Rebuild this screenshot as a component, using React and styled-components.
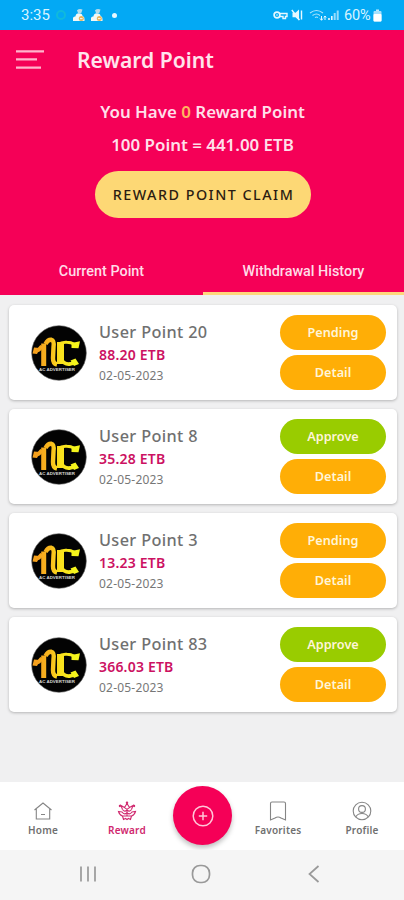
import React from "react";
import styled, { createGlobalStyle } from "styled-components";

const items = [
  { id: 1, name: "User Point 20", amount: "88.20 ETB", date: "02-05-2023", status: "Pending" },
  { id: 2, name: "User Point 8", amount: "35.28 ETB", date: "02-05-2023", status: "Approve" },
  { id: 3, name: "User Point 3", amount: "13.23 ETB", date: "02-05-2023", status: "Pending" },
  { id: 4, name: "User Point 83", amount: "366.03 ETB", date: "02-05-2023", status: "Approve" },
];

const CloudIcon = () => (
  <svg width="13" height="14" viewBox="0 0 13 14">
    <path d="M5 2.2Q7.5 0.2 10.5 1.6L9.3 5H6Z" fill="#b5dcec" />
    <path d="M1 13V10Q1.2 8.3 3.4 8.5Q4 5.2 7 5.3Q10.4 5.4 10.6 8.3Q12.6 8.6 12.5 11V13Z" fill="#f4f8f5" />
    <circle cx="9.3" cy="10.6" r="2.5" fill="#e8b45c" />
    <path d="M8 10.6h2.6" stroke="#fff" strokeWidth="0.9" />
  </svg>
);

const StatusIcons = () => (
  <svg width="68" height="14" viewBox="0 0 68 14" fill="none" stroke="#e6f8ff">
    <circle cx="4" cy="7" r="2.9" strokeWidth="1.7" />
    <path d="M6.5 5.5H14V8.5H12.5V10.5H10V8.5H6.5" strokeWidth="1.4" />
    <circle cx="4" cy="7" r="0.8" fill="#e6f8ff" stroke="none" />
    <path d="M19.5 4.7h3L26 1.5v11l-3.5-3.200H19.5Z" fill="#e6f8ff" stroke="none" />
    <path d="M18.8 2l7.700 10M28.5 2.5v9" strokeWidth="1.4" />
    <path d="M37 5Q43.5 0 50 5M39.5 7.5Q43.5 4.5 47 7.5M42 9.5Q43.5 8.5 45 9.5" strokeWidth="1.1" opacity="0.75" />
    <path d="M48.5 8v4M47 10.5l1.5 1.8 1.5-1.8M52 12V8M50.8 9.5L52 8l1.2 1.5" strokeWidth="1" />
    <path d="M56 12v-2M58.8 12V8" strokeWidth="1.6" />
    <path d="M61.7 12V5M64.7 12V2.5" strokeWidth="2" opacity="0.65" />
  </svg>
);

const BatteryIcon = () => (
  <svg width="9" height="13" viewBox="0 0 9 13">
    <path d="M3 0.5h3v1.5h-3Z" fill="#bfeaff" />
    <rect x="0.5" y="2" width="8" height="10.5" rx="1" fill="#a5e0fd" />
    <rect x="0.5" y="5" width="8" height="7.5" rx="1" fill="#fff" />
  </svg>
);

const MenuIcon = () => (
  <svg width="30" height="22" viewBox="0 0 30 22" stroke="#ffb3cc" strokeWidth="2.2">
    <path d="M1 2.3h28M1 10.3h21M1 18.7h25" />
  </svg>
);

const Logo = () => (
  <svg width="56" height="56" viewBox="0 0 56 56">
    <defs>
      <linearGradient id="gold" gradientUnits="userSpaceOnUse" x1="2" y1="0" x2="50" y2="0">
        <stop offset="0" stopColor="#f39a20" />
        <stop offset="0.35" stopColor="#f9b81d" />
        <stop offset="0.55" stopColor="#fbe01d" />
        <stop offset="1" stopColor="#f3f51c" />
      </linearGradient>
    </defs>
    <circle cx="28" cy="28" r="27.3" fill="#030303" stroke="#555" strokeWidth="0.6" />
    <g fill="none" stroke="url(#gold)">
      <path d="M4 25.500Q8 26 11 21" strokeWidth="4" />
      <path d="M12.700 18.500V41" strokeWidth="5" />
      <path d="M14.500 19Q17 14.300 20.500 14.800Q23.300 15.500 22.500 22L22 33Q21.800 38.500 26 39.500" strokeWidth="4.400" />
      <path d="M29.500 17V39" strokeWidth="7" />
      <path d="M27 19.500Q31 16.800 36 17.300Q40 17.600 43 19" strokeWidth="3" />
      <path d="M30 34Q33 39.800 39 39Q42 38.500 45 37" strokeWidth="3.800" />
    </g>
    <path d="M3 22.500l-1.500 6 4.500.5 3-6Z" fill="#f5a01c" />
    <path d="M40.500 18l8.500-1.700-1.500 7-7-.300Z" fill="#f5f51c" />
    <path d="M39.500 35.500l5-2 3.500 5.500-5 2Z" fill="#f5f51c" />
    <text x="8" y="46.200" fontSize="4.200" fill="#d4d4d4" fontWeight="700" fontFamily="Liberation Sans, sans-serif" textLength="36" lengthAdjust="spacingAndGlyphs">AC ADVERTISER</text>
  </svg>
);

const HomeIcon = () => (
  <svg width="20" height="20" viewBox="0 0 20 20">
    <path d="M1.500 9L10 2L18.500 9M3.300 7.7V18H16.700V7.700M8 13.5h4" />
  </svg>
);

const RewardIcon = () => (
  <svg width="20" height="20" viewBox="0 0 20 20">
    <path d="M10 2.500L7.500 6.500L4 4.500L5.500 8.500M10 2.500L12.500 6.500L16 4.500L14.500 8.500" />
    <path d="M5.500 8.500Q7.500 11.500 10 9Q12.500 11.500 14.500 8.500M7.500 6.500Q10 9.500 12.500 6.500" />
    <path d="M1.500 10.500L5 11Q7 14 10 12Q13 14 15 11L18.500 10.500Q17.500 14 14.500 15H5.500Q2.500 14 1.500 10.500Z" />
    <path d="M5.500 15L6.500 18.500L8.500 17.500L10 18.500L11.500 17.500L13.500 18.500L14.500 15M10 9v6" />
    <circle cx="10" cy="1.700" r="0.700" />
    <circle cx="2.900" cy="5" r="0.600" />
    <circle cx="17.100" cy="5" r="0.600" />
  </svg>
);

const FavoriteIcon = () => (
  <svg width="20" height="20" viewBox="0 0 20 20">
    <path d="M2.500 2.500Q2.500 1 4 1H16Q17.500 1 17.500 2.500V19L13 17Q10 15 7 17L2.500 19Z" />
  </svg>
);

const ProfileIcon = () => (
  <svg width="20" height="20" viewBox="0 0 20 20">
    <circle cx="10" cy="10" r="8.800" />
    <circle cx="10" cy="8" r="3.400" />
    <path d="M3.700 16Q5.500 12.500 10 12.500Q14.500 12.500 16.300 16" />
  </svg>
);

const PlusIcon = () => (
  <svg width="22" height="22" viewBox="0 0 22 22" fill="none" stroke="#ffc6d8" strokeWidth="1.5">
    <circle cx="11" cy="11" r="9.8" />
    <path d="M11 6.8v8.4M6.8 11h8.4" />
  </svg>
);

const HistoryCard = ({ name, amount, date, status }) => {
  return (
    <Card>
      <Logo />
      <CardInfo>
        <CardName>{name}</CardName>
        <CardAmount>{amount}</CardAmount>
        <CardDate>{date}</CardDate>
      </CardInfo>
      <CardActions>
        <Pill $approved={status === "Approve"}>{status}</Pill>
        <Pill>Detail</Pill>
      </CardActions>
    </Card>
  );
};

const App = () => {
  return (
    <Screen>
      <GlobalStyle />
      <StatusBar>
        <Clock>3:35</Clock>
        <Ring />
        <CloudIcon />
        <CloudIcon />
        <Dot />
        <StatusRight>
          <StatusIcons />
          <Battery>60%</Battery>
          <BatteryIcon />
        </StatusRight>
      </StatusBar>
      <Header>
        <TitleRow>
          <MenuIcon />
          <Title>Reward Point</Title>
        </TitleRow>
        <Summary>
          <Balance>
            You Have <em>0</em> Reward Point
          </Balance>
          <Rate>100 Point = 441.00 ETB</Rate>
          <ClaimButton>REWARD POINT CLAIM</ClaimButton>
        </Summary>
        <Tabs>
          <Tab>Current Point</Tab>
          <Tab $active>Withdrawal History</Tab>
        </Tabs>
      </Header>
      <List>
        {items.map((item) => (
          <HistoryCard key={item.id} {...item} />
        ))}
      </List>
      <BottomNav>
        <NavItem><HomeIcon />Home</NavItem>
        <NavItem $active><RewardIcon />Reward</NavItem>
        <AddSlot>
          <AddButton><PlusIcon /></AddButton>
        </AddSlot>
        <NavItem><FavoriteIcon />Favorites</NavItem>
        <NavItem><ProfileIcon />Profile</NavItem>
      </BottomNav>
      <SystemBar>
        <svg width="18" height="18" viewBox="0 0 18 18">
          <path d="M2 1.5v15M9 1.5v15M16 1.5v15" />
        </svg>
        <svg width="20" height="20" viewBox="0 0 20 20">
          <rect x="1.5" y="1.5" width="17" height="17" rx="7.5" />
        </svg>
        <svg width="18" height="20" viewBox="0 0 18 20">
          <path d="M13.5 2L4.5 10L13.5 18" />
        </svg>
      </SystemBar>
    </Screen>
  );
};

const GlobalStyle = createGlobalStyle`
  * {
    box-sizing: border-box;
  }
  body {
    margin: 0;
    font-family: "Noto Sans", sans-serif;
  }
  svg {
    display: block;
    flex-shrink: 0;
  }
  button {
    border: 0;
    padding: 0;
    font-family: inherit;
  }
`;

const Screen = styled.div`
  display: flex;
  flex-direction: column;
  width: 404px;
  height: 900px;
  background: #f0f0f1;
  overflow: hidden;
  white-space: nowrap;
`;

const StatusBar = styled.div`
  display: flex;
  align-items: center;
  height: 30px;
  padding: 0 22px 0 21px;
  background: #03a9f4;
  color: #d9f4ff;
  font-family: Roboto, sans-serif;
  font-size: 15px;
`;

const Clock = styled.span`
  width: 30px;
`;

const Ring = styled.span`
  width: 10px;
  height: 10px;
  margin: 0 6px 0 5px;
  border: 2px solid #10b9dc;
  border-radius: 50%;

  & + svg {
    margin-right: 5px;
  }
`;

const Dot = styled.span`
  width: 5px;
  height: 5px;
  margin-left: 9px;
  border-radius: 50%;
  background: #e6f8ff;
`;

const StatusRight = styled.div`
  display: flex;
  align-items: center;
  margin-left: auto;
`;

const Battery = styled.span`
  width: 28px;
  margin-left: 3px;
  margin-right: 1px;
  font-size: 14.5px;
  letter-spacing: -0.2px;
`;

const Header = styled.header`
  display: flex;
  flex-direction: column;
  height: 265px;
  background: #f50057;
`;

const TitleRow = styled.div`
  display: flex;
  align-items: center;
  gap: 32px;
  height: 60px;
  padding-left: 15px;
`;

const Title = styled.h1`
  margin: 0;
  color: #ffe3ec;
  font-size: 21.1px;
  font-weight: 600;
  line-height: 30px;
`;

const Summary = styled.div`
  display: flex;
  flex-direction: column;
  align-items: center;
  padding: 5px 0 0 1px;
`;

const Balance = styled.p`
  margin: 0;
  color: #ffdfe9;
  font-size: 16.9px;
  font-weight: 600;
  line-height: 33px;

  em {
    color: #ffb55f;
    font-style: normal;
  }
`;

const Rate = styled(Balance)``;

const ClaimButton = styled.button`
  width: 216px;
  height: 47px;
  margin-top: 10px;
  padding-left: 2px;
  border-radius: 24px;
  background: #fdd875;
  color: #2b1c12;
  font-size: 14.3px;
  font-weight: 500;
  letter-spacing: 1.5px;
`;

const Tabs = styled.div`
  display: grid;
  grid-template-columns: 203px 201px;
  height: 48px;
  margin-top: auto;
`;

const Tab = styled.div`
  display: flex;
  align-items: center;
  justify-content: center;
  padding-top: ${({ $active }) => ($active ? "3px" : "0")};
  border-bottom: ${({ $active }) => ($active ? "3px solid #fed77c" : "0")};
  color: #ffdce7;
  font-family: Roboto, sans-serif;
  font-size: 14.4px;
  font-weight: 500;
`;

const List = styled.main`
  flex: 1;
  display: flex;
  flex-direction: column;
  gap: 9px;
  padding: 10px 7px 0 9px;
`;

const Card = styled.article`
  display: flex;
  align-items: center;
  height: 95px;
  padding: 0 11px 0 22px;
  border-radius: 5px;
  background: #fff;
  box-shadow: 0 1px 3px rgba(0, 0, 0, 0.25);
`;

const CardInfo = styled.div`
  display: flex;
  flex-direction: column;
  margin-left: 12px;
`;

const CardName = styled.span`
  color: #707070;
  font-size: 16.3px;
  font-weight: 500;
  letter-spacing: 0.35px;
  line-height: 24px;
`;

const CardAmount = styled.span`
  color: #cc1162;
  font-size: 14px;
  font-weight: 600;
  letter-spacing: 0.2px;
  line-height: 22px;
`;

const CardDate = styled.span`
  color: #777;
  font-size: 12px;
  letter-spacing: 0.2px;
  line-height: 20px;
`;

const CardActions = styled.div`
  display: flex;
  flex-direction: column;
  gap: 5px;
  margin-left: auto;
`;

const Pill = styled.button`
  width: 106px;
  height: 35px;
  padding-bottom: 1px;
  border-radius: 18px;
  background: ${({ $approved }) => ($approved ? "#99cc00" : "#ffae06")};
  color: #fff5d8;
  font-size: 12.7px;
  font-weight: 600;
`;

const BottomNav = styled.nav`
  display: flex;
  height: 68px;
  padding-left: 1px;
  background: #fff;
`;

const NavItem = styled.div`
  display: flex;
  flex-direction: column;
  align-items: center;
  width: 84px;
  padding-top: 19px;
  color: ${({ $active }) => ($active ? "#d0286e" : "#707070")};
  font-size: 10px;
  font-weight: 600;
  line-height: 18px;
  letter-spacing: 0.2px;

  svg {
    fill: none;
    stroke: ${({ $active }) => ($active ? "#d0286e" : "#858585")};
    stroke-width: 1.1;
  }
`;

const AddSlot = styled.div`
  display: flex;
  justify-content: center;
  width: 67px;
  padding-top: 4px;
`;

const AddButton = styled.button`
  display: flex;
  align-items: center;
  justify-content: center;
  width: 59px;
  height: 59px;
  border-radius: 50%;
  background: #f50057;
  box-shadow: 0 3px 5px rgba(0, 0, 0, 0.25);
`;

const SystemBar = styled.div`
  display: flex;
  align-items: center;
  justify-content: space-between;
  height: 50px;
  padding: 0 81px 2px 79px;
  background: #f5f5f5;

  svg {
    fill: none;
    stroke: #999;
    stroke-width: 1.7;
  }
`;

export default App;
